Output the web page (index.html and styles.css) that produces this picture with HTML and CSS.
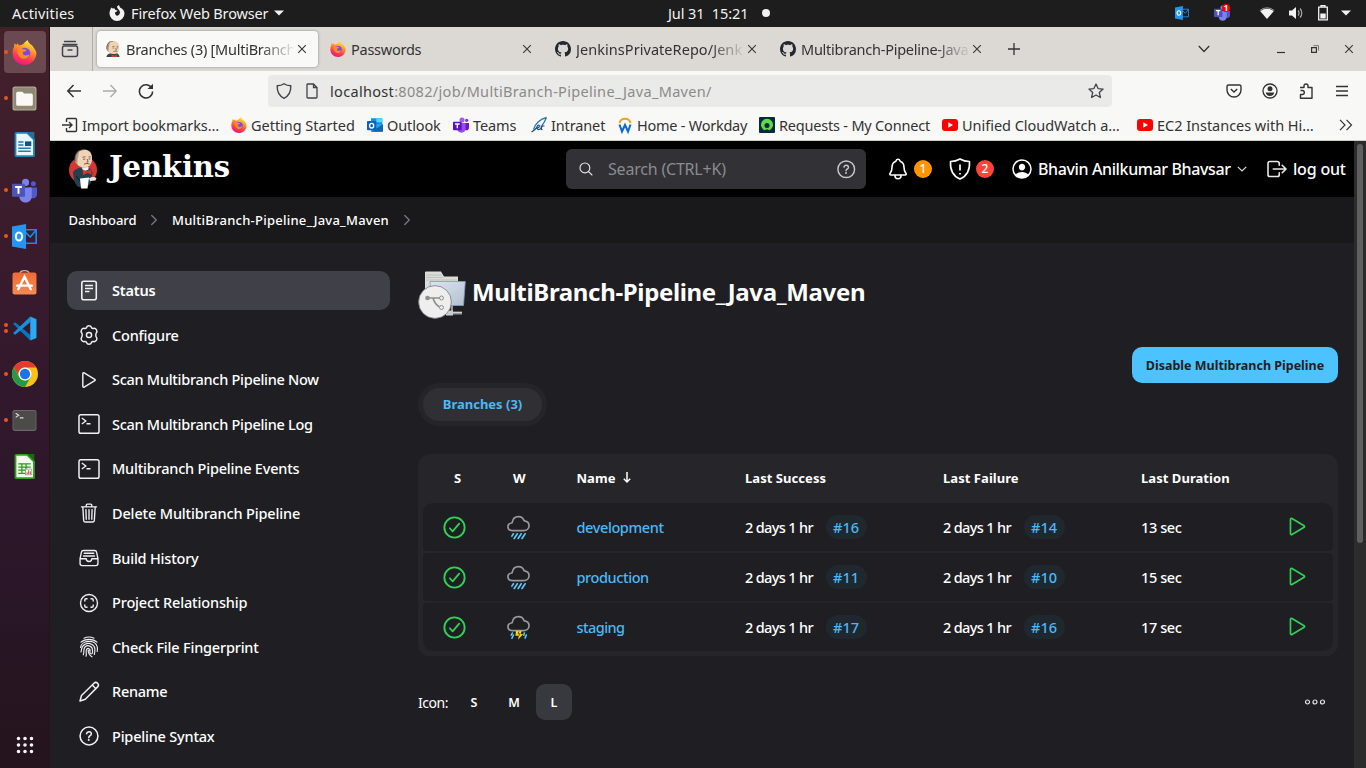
FILE: index.html
```html
<!DOCTYPE html>
<html lang="en">
<head>
<meta charset="utf-8">
<title>Branches (3) [MultiBranch-Pipeline_Java_Maven]</title>
<link rel="stylesheet" href="styles.css">
</head>
<body>
<svg class="sprite" width="0" height="0">
  <defs>
    <linearGradient id="g-fox" x1="0.7" y1="0" x2="0.3" y2="1"><stop offset="0" stop-color="#fff14f"/><stop offset=".35" stop-color="#ff9a26"/><stop offset=".7" stop-color="#ff3a50"/><stop offset="1" stop-color="#e31587"/></linearGradient>
    <linearGradient id="g-bag" x1="0" y1="0" x2="0" y2="1"><stop offset="0" stop-color="#f26a34"/><stop offset="1" stop-color="#f58a52"/></linearGradient>
    <linearGradient id="g-fold" x1="0" y1="0" x2="1" y2="1"><stop offset="0" stop-color="#dbe4ec"/><stop offset="1" stop-color="#b2c1d0"/></linearGradient>
    <symbol id="firefox" viewBox="0 0 24 24"><path d="M12 2.500C13 1.500 14 1 15 0c.5 2 1.500 3 3 4.200 1 .3 2.300 1.800 3.200 3.600C23 10 23.800 12 23.300 14.500 22.300 20 17.800 24 12 24 5.500 24 .5 19 .5 12.800c0-2.600.5-4.600 1.500-6.300L2.200 3l2 1.800L5.500 3.200l1.200 2c2-.5 3.600.1 5.300-2.700z" fill="url(#g-fox)"/><circle cx="12.300" cy="12.800" r="5.300" fill="#7548e8"/><path d="M5 9.500c2-1.800 3.800-1.600 5.300-.8l3.700.6c-.3 1.700-2.300 2-3.400 2.200-.5 1.800.4 3.200 2.600 3.300 1.700.1 2.700-1.300 3.600-.7-.8 2.700-3.300 4.200-6 3.800C7.300 17.300 5 14 5 9.500z" fill="#ff8a1f"/></symbol>
    <symbol id="outlook" viewBox="0 0 24 24"><path d="M6 2h16a1 1 0 0 1 1 1v10H6z" fill="#1490df"/><path d="M14 2h9v6h-9z" fill="#50d9ff"/><path d="M6 11h18v10a1 1 0 0 1-1 1H7a1 1 0 0 1-1-1z" fill="#28a8ea"/><path d="M6 22l18-11v10a1 1 0 0 1-1 1z" fill="#1066b5"/><rect x="0" y="6" width="14" height="14" rx="1.200" fill="#0a64bd"/><ellipse cx="7" cy="13" rx="3.100" ry="3.500" fill="none" stroke="#fff" stroke-width="2"/></symbol>
    <symbol id="outlook-old" viewBox="0 0 24 24"><path d="M12 5.500h11.200v13H12" fill="none" stroke="#1e88e5" stroke-width="1.600"/><path d="M13 8l4.500 4.500L23 6" fill="none" stroke="#1e88e5" stroke-width="1.600"/><path d="M0 2.500L13.500 0v24L0 21.500z" fill="#2196f3"/><ellipse cx="6.700" cy="12" rx="3" ry="3.800" fill="none" stroke="#fff" stroke-width="2"/></symbol>
    <symbol id="teams" viewBox="0 0 24 24"><circle cx="20.500" cy="5.600" r="2.400" fill="#5059c9"/><circle cx="13" cy="4.200" r="3.400" fill="#7b83eb"/><path d="M16 9h8v6.500c0 2.500-1.800 4-4 4s-4-1.500-4-4z" fill="#5059c9"/><path d="M7 9h12v8.500c0 3.500-2.500 6-6 6s-6-2.500-6-6z" fill="#7b83eb"/><rect x="0" y="5.500" width="12.500" height="12.500" rx="1" fill="#4b53bc"/><path d="M3 8.600h6.500M6.250 8.600V15.200" stroke="#fff" stroke-width="1.900"/></symbol>
    <symbol id="teams-new" viewBox="0 0 24 24"><circle cx="20.500" cy="5" r="2.400" fill="#7b2ff2"/><circle cx="13.500" cy="4.500" r="3.800" fill="#a35bf0"/><path d="M16 9h8v7c0 2.500-1.800 4-4 4s-4-1.500-4-4z" fill="#6a12d8"/><path d="M6 9h13v8c0 4-2.500 6.500-6.300 6.500S6 21 6 17z" fill="#9a4aea"/><rect x="0" y="7" width="13" height="13" rx="1.200" fill="#5b12c0"/><path d="M3 10.500h7M6.500 10.500V17" stroke="#fff" stroke-width="2"/></symbol>
    <symbol id="github" viewBox="0 0 16 16"><path fill="#24292f" d="M8 0C3.580 0 0 3.580 0 8c0 3.540 2.290 6.530 5.470 7.590.4.070.55-.17.55-.38 0-.19-.01-.82-.01-1.490-2.010.37-2.530-.49-2.690-.94-.09-.23-.48-.94-.82-1.130-.28-.15-.68-.52-.01-.53.630-.01 1.080.58 1.230.82.72 1.210 1.870.87 2.330.66.07-.52.28-.87.51-1.070-1.780-.2-3.640-.89-3.640-3.950 0-.87.31-1.590.82-2.150-.08-.2-.36-1.020.08-2.120 0 0 .67-.21 2.200.82.640-.18 1.320-.27 2-.27s1.360.09 2 .27c1.530-1.040 2.200-.82 2.200-.82.440 1.100.160 1.920.080 2.120.510.560.820 1.270.820 2.150 0 3.070-1.870 3.750-3.650 3.950.290.250.540.730.540 1.480 0 1.070-.010 1.930-.010 2.200 0 .210.150.460.550.380A8.010 8.010 0 0 0 16 8c0-4.420-3.580-8-8-8z"/></symbol>
    <g id="head"><path d="M6 11C6 4 9.500.6 15 .6S23.300 4 23 10.500c-.2 5-3 8-7.500 8S7.500 16 6 11z" fill="#efd3b4"/><path d="M6 12c-.8-5 1.500-9.500 5-11C9 4 9.800 7 8.500 10l-.2 5.500C6.800 14.500 6.200 13.500 6 12z" fill="#a89a88"/><path d="M6 12C5 5 9.500.5 15 .5" stroke="#333" stroke-width=".8" fill="none"/><path d="M13.500 8.300l3-.5m3 0l2.300.3M14 10.200h2.200m3.300-.2h1.800M18.200 10l.9 3-1.500.3" stroke="#5a4638" stroke-width=".8" fill="none"/><path d="M15 15.300c1.500-1 4-1 5.500-.3" stroke="#7d4a3a" stroke-width="1" fill="none"/></g>
    <symbol id="butler" viewBox="0 0 28 40"><ellipse cx="14" cy="21" rx="14" ry="13.500" fill="#d33833"/><path d="M4 23c2-3 6-4.500 9-4.500h6c3 1 4 3 4.500 5L22 34l-4 4H9.500C6 36 4.500 30 4 23z" fill="#24404c"/><path d="M12.500 18.500l2.500 4 4.500-2V18z" fill="#f4f1ec"/><use href="#head"/><path d="M13.500 20.500l4.500 1.800 4.500-2v5.200L18.500 24l-4.500 2z" fill="#d9332d"/><path d="M7 27l4 5" stroke="#0d222b" fill="none"/><path d="M11 29.500l9-1-1.500 11h-6.500z" fill="#fff"/><path d="M20 29.500c2-1.500 5-2 7.500-.5l-1 2.500-5.500.5z" fill="#e8e3dd"/></symbol>
    <symbol id="butler-face" viewBox="0 0 20 22"><path d="M1 22c.5-4 4-5 8-5.500h5c3 .5 4.500 2.500 5 5.500z" fill="#2d4651"/><use href="#head" transform="translate(-4.500 -.5)"/><path d="M8 18.500l4 1.500 4-1.500V22H8z" fill="#d9332d"/></symbol>
    <symbol id="doc" viewBox="0 0 16 16"><path d="M3.500 1h6L13 4.500V14a1 1 0 0 1-1 1H4a1 1 0 0 1-1-1V1.500zM9.500 1v3.500H13" fill="none" stroke="#42424a" stroke-width="1.300"/></symbol>
    <symbol id="yt" viewBox="0 0 16 16"><rect y="2" width="16" height="12" rx="3" fill="#f00"/><path d="M6.300 5.300v5.400L11 8z" fill="#fff"/></symbol>
    <symbol id="x" viewBox="0 0 10 10"><path d="M1.200 1.200l7.600 7.600M8.800 1.200L1.200 8.800" fill="none" stroke="#3d3d3d" stroke-width="1.200"/></symbol>
    <symbol id="help" viewBox="0 0 512 512"><circle cx="256" cy="256" r="208" fill="none" stroke="currentColor" stroke-width="36"/><path d="M200 202.300s.8-17.500 19.600-32.600C230.700 160.800 244 158.200 256 158c10.900-.1 20.700 1.700 26.500 4.500 10 4.700 29.500 16.300 29.500 41 0 26-17 37.800-36.400 50.800S251 281.400 251 296" fill="none" stroke="currentColor" stroke-width="36" stroke-linecap="round"/><circle cx="250" cy="348" r="24" fill="currentColor"/></symbol>
    <symbol id="chev" viewBox="0 0 512 512"><path d="M184 112l144 144-144 144" fill="none" stroke="currentColor" stroke-width="44" stroke-linecap="round" stroke-linejoin="round"/></symbol>
    <symbol id="play" viewBox="0 0 512 512"><path d="M112 111v290c0 17.400 17 28.500 31 20.200l247.900-148.400c12.100-7.300 12.100-26.300 0-33.600L143 90.800c-14-8.300-31 2.800-31 20.200z" fill="none" stroke="currentColor" stroke-width="34"/></symbol>
    <symbol id="term" viewBox="0 0 22 22"><rect x="1" y="1.800" width="20" height="18.400" rx="1.800" fill="none" stroke="currentColor" stroke-width="1.500"/><path d="M3.800 5l4 3-4 3M8.500 10.800h4" fill="none" stroke="currentColor" stroke-width="1.400"/></symbol>
    <symbol id="ok" viewBox="0 0 512 512"><circle cx="256" cy="256" r="208" fill="none" stroke="#30d158" stroke-width="38"/><path d="M352 176L217.600 336 160 272" fill="none" stroke="#30d158" stroke-width="36" stroke-linecap="round" stroke-linejoin="round"/></symbol>
    <symbol id="cloud" viewBox="0 0 512 512"><path d="M114.600 162.900A16 16 0 0 0 128 149.600C140 76.200 193 32 256 32c58 0 96.600 37.800 112.200 77.700a15.800 15.800 0 0 0 12.200 9.900c50 8.200 91.600 41.600 91.600 99.600 0 59.400-48.600 100.800-108 100.800H130c-49.500 0-90-24.700-90-79.200 0-48.500 38.700-72.200 74.600-77.900z" fill="none" stroke="#98989d" stroke-width="34"/></symbol>
    <symbol id="rain" viewBox="0 0 512 512"><use href="#cloud"/><path d="M144 384l-32 48M224 384l-64 96M304 384l-64 96M384 384l-64 96" transform="translate(8)" stroke="#5ac8fa" stroke-width="34" stroke-linecap="round"/></symbol>
    <symbol id="storm" viewBox="0 0 512 512"><use href="#cloud"/><path d="M130 370l-24 42M152 410l-30 66M376 370l-10 42M416 410l-24 62" stroke="#5ac8fa" stroke-width="34" stroke-linecap="round"/><path d="M205 325h115l-18 62h48l-102 118 14-82h-70z" fill="#ffd60a"/><path d="M264 335l-16 50h40l-20 40" fill="none" stroke="#3a3420" stroke-width="16"/></symbol>
  </defs>
</svg>

<header class="topbar">
  <span class="activities">Activities</span>
  <svg class="tb-fox" viewBox="0 0 16 16"><path d="M8 1.500L10 0l1 2.500C13.500 3.500 15.500 5.500 15.500 8.500a7.500 7.500 0 0 1-15 0C.5 6 1.300 4 2.500 2.500l1.200 1 1.500-.3L6.500 5l2 .5c0 1.500-2 1-2.500 2.300C6 10 7.500 11 9 10.500c2.500-1 2.500-4.500.5-6C8.500 3.500 8 2.500 8 1.500z" fill="#f2f2f2"/></svg>
  <span class="app-name">Firefox Web Browser</span>
  <svg class="caret" viewBox="0 0 10 6"><path d="M0 .5h10L5 5.500z" fill="#f2f2f2"/></svg>
  <span class="clock">Jul 31&nbsp; 15:21</span><i class="clock-dot"></i>
  <div class="tray">
    <svg class="t-ol" viewBox="0 0 24 24"><use href="#outlook-old"/></svg>
    <span class="t-teams"><svg viewBox="0 0 24 24"><use href="#teams"/></svg><b>1</b></span>
    <svg class="t-wifi" viewBox="0 0 16 14"><path d="M1.300 5.200a10.500 10.500 0 0 1 13.400 0L8 13z" fill="#f2f2f2"/><path d="M.8 4.500a11 11 0 0 1 14.400 0" fill="none" stroke="#a8a8a8" stroke-width=".9"/></svg>
    <svg class="t-vol" viewBox="0 0 16 14"><path d="M1 4.500h3L8 1v12L4 9.500H1z" fill="#f2f2f2"/><path d="M10 4.500a3.500 3.500 0 0 1 0 5M12 2.500a6.500 6.500 0 0 1 0 9" fill="none" stroke="#aaa" stroke-width="1.200"/></svg>
    <svg class="t-bat" viewBox="0 0 10 16"><path d="M.7 2.200h8.600v12.600H.7zM3 .7h4v1.500H3z" fill="none" stroke="#f2f2f2" stroke-width="1.300"/><path d="M2.300 8.500h5.400v5H2.300z" fill="#f2f2f2"/></svg>
    <svg class="caret" viewBox="0 0 10 6"><path d="M0 .5h10L5 5.500z" fill="#f2f2f2"/></svg>
  </div>
</header>

<div class="desk">
  <nav class="dock">
    <span class="dk active run"><svg viewBox="0 0 24 24"><use href="#firefox"/></svg></span>
    <span class="dk run"><svg viewBox="0 0 24 24"><rect x=".5" y=".5" width="23" height="23" rx="2.500" fill="#b3ac98"/><rect x="1.500" y="1.500" width="21" height="21" rx="2" fill="#8f8873"/><path d="M4 7a1.500 1.500 0 0 1 1.500-1.500H10l1.500 1.800h7A1.500 1.500 0 0 1 20 8.800v8.700a1.500 1.500 0 0 1-1.500 1.500h-13A1.500 1.500 0 0 1 4 17.500z" fill="#faf9f7"/></svg></span>
    <span class="dk"><svg viewBox="0 0 24 24"><path d="M2.500 1.500a1.500 1.500 0 0 1 1.500-1.500h11l7 7v15.500a1.500 1.500 0 0 1-1.500 1.500H4A1.500 1.500 0 0 1 2.500 22.500z" fill="#1f86bd"/><path d="M4.200 1.700h10l6 6v14.600h-16z" fill="#eaf6fd"/><path d="M15 0h6.500v6.500z" fill="#2a6f96"/><path d="M6 9.500h5M6 12.500h5M6 15.500h12M6 18.500h12" stroke="#1f7fb5" stroke-width="1.400"/><path d="M12.500 9h6v4.500h-6z" fill="#14557c"/></svg></span>
    <span class="dk run"><svg viewBox="0 0 24 24"><use href="#teams"/></svg></span>
    <span class="dk run"><svg viewBox="0 0 24 24"><use href="#outlook-old"/></svg></span>
    <span class="dk"><svg viewBox="0 0 24 24"><path d="M7.500 4C7.500-.6 16.500-.6 16.500 4" fill="none" stroke="#cbb59b" stroke-width="1.200"/><rect x=".5" y="2.500" width="23" height="21" rx="2" fill="url(#g-bag)"/><path d="M6 18.500L12 6.500l6 12M5 15h14" fill="none" stroke="#fff" stroke-width="2.300" stroke-linecap="round"/></svg></span>
    <span class="dk run two"><svg viewBox="0 0 24 24"><path d="M1 7.500L3 6l14.500 12v5.500z" fill="#0079c4"/><path d="M1 16.500L3 18 17.500 6V.5z" fill="#1490df"/><path d="M17.500.5L23.500 3v18l-6 2.500z" fill="#2ba9f2"/></svg></span>
    <span class="dk run"><svg class="chrome" viewBox="0 0 48 48"><circle cx="24" cy="24" r="24" fill="#fbc116"/><path d="M3.200 12A24 24 0 0 1 44.800 12H24a12 12 0 0 0-10.400 18z" fill="#e33b2e"/><path d="M3.200 12A24 24 0 0 0 24 48l10.400-18A12 12 0 0 1 13.600 30z" fill="#229a48"/><circle cx="24" cy="24" r="12" fill="#fff"/><circle cx="24" cy="24" r="9.500" fill="#1a73e8"/></svg></span>
    <span class="dk run"><svg viewBox="0 0 24 24"><rect x=".5" y="2" width="23" height="20" rx="2" fill="#6a6866"/><rect x="1.300" y="2.800" width="21.400" height="18" rx="1.500" fill="#4c4b49"/><path d="M3.500 5l3 2-3 2M7.500 9.500h3.500" fill="none" stroke="#ddd" stroke-width="1.100"/></svg></span>
    <span class="dk"><svg viewBox="0 0 24 24"><path d="M2.500 1.500a1.500 1.500 0 0 1 1.500-1.500h11l7 7v15.500a1.500 1.500 0 0 1-1.500 1.500H4A1.500 1.500 0 0 1 2.500 22.500z" fill="#30a01c"/><path d="M4.200 1.700h10l6 6v14.600h-16z" fill="#f2fbef"/><path d="M15 0h6.500v6.500z" fill="#1b6a10"/><path d="M6 9.500h12M6 12.500h12M6 15.500h12M6 18.500h7M9.500 9v10M13.500 9v10" stroke="#2c9a1a" stroke-width="1.200"/><rect x="13" y="14.500" width="6" height="5.500" fill="#fff" stroke="#888" stroke-width=".6"/><path d="M14.500 19.500v-2M16 19.500v-4M17.600 19.500v-3" stroke="#e0452c" stroke-width="1"/></svg></span>
    <svg class="apps" viewBox="0 0 18 18"><path d="M2.500 2.500h0M9 2.500h0M15.500 2.500h0M2.500 9h0M9 9h0M15.500 9h0M2.500 15.500h0M9 15.500h0M15.500 15.500h0" stroke="#f5f5f5" stroke-width="3.600" stroke-linecap="round"/></svg>
  </nav>

  <div class="browser">
    <div class="tabs">
      <div class="view-btn"><svg viewBox="0 0 18 18"><path d="M3.500 1.500h11M2 4.500h14" stroke="#42424a" stroke-width="1.300" stroke-linecap="round"/><rect x="1.500" y="6" width="15" height="10.500" rx="2" fill="none" stroke="#42424a" stroke-width="1.500"/><path d="M6.500 10h5" stroke="#42424a" stroke-width="1.500"/></svg></div>
      <div class="tab on"><svg class="fav"><use href="#butler-face"/></svg><span class="tl fade">Branches (3) [MultiBranch</span><svg class="cx"><use href="#x"/></svg></div>
      <div class="tab"><svg class="fav"><use href="#firefox"/></svg><span class="tl">Passwords</span><svg class="cx"><use href="#x"/></svg></div>
      <div class="tab"><svg class="fav"><use href="#github"/></svg><span class="tl fade repo">JenkinsPrivateRepo/Jenk</span><svg class="cx"><use href="#x"/></svg></div>
      <div class="tab"><svg class="fav"><use href="#github"/></svg><span class="tl fade">Multibranch-Pipeline-Java</span><svg class="cx"><use href="#x"/></svg></div>
      <svg class="plus" viewBox="0 0 12 12"><path d="M6 0v12M0 6h12" stroke="#333" stroke-width="1.300"/></svg>
      <div class="winctl">
        <svg class="w-chev" viewBox="0 0 12 8"><path d="M.8 1L6 6.500 11.200 1" fill="none" stroke="#333" stroke-width="1.300"/></svg>
        <svg class="w-min" viewBox="0 0 8 10"><path d="M0 7.500h8" stroke="#333" stroke-width="1.200"/></svg>
        <svg class="w-max" viewBox="0 0 8 8"><path d="M.6 2.600h4.800v4.800H.6z" fill="none" stroke="#333" stroke-width="1.200"/><path d="M2.500.6h5v5" fill="none" stroke="#777"/></svg>
        <svg class="w-x"><use href="#x"/></svg>
      </div>
    </div>
    <div class="nav">
      <svg class="n-back" viewBox="0 0 14 14"><path d="M14 7H1M6.500 1L.8 7l5.700 6" fill="none" stroke="#333" stroke-width="1.500"/></svg>
      <svg class="n-fwd" viewBox="0 0 14 14"><path d="M0 7h13M7.500 1l5.700 6-5.700 6" fill="none" stroke="#aaa" stroke-width="1.300"/></svg>
      <svg class="n-re" viewBox="0 0 16 16"><path d="M13.800 5.200A6.600 6.600 0 1 0 14.600 8.500" fill="none" stroke="#333" stroke-width="1.500"/><path d="M15 .8V6H9.500z" fill="#333"/></svg>
      <div class="url">
        <svg class="u-sh" viewBox="0 0 16 16"><path d="M8 .8c2 1.500 4.300 2 6.800 2C15 8.500 12.800 13 8 15.300 3.200 13 1 8.500 1.200 2.800c2.500 0 4.800-.5 6.800-2z" fill="none" stroke="#42424a" stroke-width="1.400" stroke-linejoin="round"/></svg>
        <svg class="u-doc"><use href="#doc"/></svg>
        <span class="addr"><b>localhost</b>:8082/job/MultiBranch-Pipeline_Java_Maven/</span>
        <svg class="u-star" viewBox="0 0 16 16"><path d="M8 1l2.100 4.600 5 .5-3.800 3.400 1.100 5L8 12l-4.400 2.500 1.100-5L.9 6.100l5-.5z" fill="none" stroke="#42424a" stroke-width="1.300" stroke-linejoin="round"/></svg>
      </div>
      <svg class="n-ic" viewBox="0 0 16 16"><path d="M2.500 2h11A1.500 1.500 0 0 1 15 3.500V7A7 7 0 0 1 1 7V3.500A1.500 1.500 0 0 1 2.500 2z" fill="none" stroke="#333" stroke-width="1.400"/><path d="M4.800 6L8 9l3.200-3" fill="none" stroke="#333" stroke-width="1.400"/></svg>
      <svg class="n-ic" viewBox="0 0 16 16"><circle cx="8" cy="8" r="7" fill="none" stroke="#333" stroke-width="1.300"/><circle cx="8" cy="5.800" r="2.500" fill="#333"/><path d="M3.800 9.500h8.400c0 1.800-1.800 3.500-4.200 3.500S3.800 11.300 3.800 9.500z" fill="#333"/></svg>
      <svg class="n-ic" viewBox="0 0 16 16"><path d="M2 4.500h4V3a2 2 0 0 1 4 0v1.500h4v10.800H2.500v-3.800h1.800a2 2 0 0 0 0-4H2.500" fill="none" stroke="#333" stroke-width="1.400" stroke-linejoin="round"/></svg>
      <svg class="n-ic n-menu" viewBox="0 0 12 12"><path d="M0 1.500h12M0 6h12M0 10.500h12" stroke="#333" stroke-width="1.300"/></svg>
    </div>
    <div class="marks">
      <span><svg viewBox="0 0 16 16"><path d="M4.500 5V2.500A1 1 0 0 1 5.500 1.500h8a1 1 0 0 1 1 1v11a1 1 0 0 1-1 1h-8a1 1 0 0 1-1-1V11M0 8h10M7 5l3 3-3 3" fill="none" stroke="#333" stroke-width="1.400"/></svg><em>Import bookmarks…</em></span>
      <span><svg><use href="#firefox"/></svg><em class="wide">Getting Started</em></span>
      <span><svg><use href="#outlook"/></svg><em>Outlook</em></span>
      <span class="nudge"><svg><use href="#teams-new"/></svg><em>Teams</em></span>
      <span class="nudge"><svg viewBox="0 0 16 16"><path d="M15.500.5C9 2 4 7 2.500 12.500M15.500.5C14 4 13 6 11 8.500" fill="none" stroke="#2e79ab" stroke-width="1.300"/><path d="M.5 15c2-1 4-2 5.500-5M6.500 11c2-.3 2.500-3 1-3s-2.500 4-.5 4.500S10.500 11 11 9c-.5 2-1.500 4 .5 3.500M9.500 9h4" fill="none" stroke="#174a70" stroke-width="1.200"/></svg><em>Intranet</em></span>
      <span><svg viewBox="0 0 16 16"><path d="M2.500 6a5.700 5.700 0 0 1 11 0" fill="none" stroke="#f8a01d" stroke-width="2"/><path d="M2.500 7.500l2.500 7L8 8l3 6.500 2.500-7" fill="none" stroke="#0d66d0" stroke-width="2"/></svg><em class="tight">Home - Workday</em></span>
      <span><svg viewBox="0 0 16 16"><rect width="16" height="16" rx="1" fill="#062b3d"/><path d="M5.300 13.200a6 6 0 1 1 5.400 0L8 12.200z" fill="#5fd84a"/><circle cx="8" cy="8.600" r="2.500" fill="#062b3d"/></svg><em class="mid">Requests - My Connect</em></span>
      <span><svg><use href="#yt"/></svg><em class="wide">Unified CloudWatch a…</em></span>
      <span><svg><use href="#yt"/></svg><em class="wide">EC2 Instances with Hi…</em></span>
      <svg class="more" viewBox="0 0 14 12"><path d="M1 .8L6 6l-5 5.200M7.500.8l5 5.200-5 5.200" fill="none" stroke="#333" stroke-width="1.200"/></svg>
    </div>

    <div class="page">
      <div class="content">
        <div class="jhead">
          <svg class="logo"><use href="#butler"/></svg>
          <span class="brand">Jenkins</span>
          <div class="search">
            <svg class="s-mag" viewBox="0 0 512 512"><path d="M221 64a157 157 0 1 0 157 157A157 157 0 0 0 221 64zM338 338l110 110" fill="none" stroke="#e5e5ea" stroke-width="36" stroke-linecap="round"/></svg>
            <span class="ph">Search (CTRL+K)</span>
            <svg class="s-help"><use href="#help"/></svg>
          </div>
          <svg class="h-bell" viewBox="0 0 512 512"><path d="M427.700 351.400C402 320 383.900 304 383.900 217.300 383.900 138 343.300 109.700 310 96c-4.400-1.800-8.600-6-10-10.500C294.200 65.500 277.800 48 256 48s-38.200 17.500-44 37.500c-1.400 4.600-5.500 8.700-10 10.500-33.400 13.700-73.900 41.900-73.900 121.300C128.100 304 110 320 84.300 351.400 73.700 364.400 83 384 101.600 384h308.900c18.500 0 27.800-19.600 17.200-32.600zM320 384v16a64 64 0 0 1-128 0v-16" fill="none" stroke="#fff" stroke-width="34" stroke-linejoin="round"/></svg>
          <b class="badge org">1</b>
          <svg class="h-sh" viewBox="0 0 24 24"><path d="M12 2c3 1.800 6 2.500 9.500 2.500C22 12.500 19 19 12 22 5 19 2 12.500 2.500 4.500 6 4.500 9 3.800 12 2z" fill="none" stroke="#fff" stroke-width="1.600" stroke-linejoin="round"/><path d="M12 7.500v6M12 16v1.600" stroke="#fff" stroke-width="1.700"/></svg>
          <b class="badge red">2</b>
          <svg class="h-user" viewBox="0 0 512 512"><circle cx="256" cy="256" r="192" fill="none" stroke="#fff" stroke-width="32"/><path d="M256 144c-40 0-70 32-67.800 72.800C191 256 221.500 288 256 288s64.800-32 67.800-71.200C326.500 176 296 144 256 144zM120 380c30-42 82-60 136-60s106 18 136 60c-80 90-192 90-272 0z" fill="#fff"/></svg>
          <span class="user">Bhavin Anilkumar Bhavsar</span>
          <svg class="h-chev" viewBox="0 0 10 6"><path d="M.8.8L5 5 9.200.8" fill="none" stroke="#ddd" stroke-width="1.200"/></svg>
          <svg class="h-out" viewBox="0 0 512 512"><path d="M304 336v40a40 40 0 0 1-40 40H104a40 40 0 0 1-40-40V136a40 40 0 0 1 40-40h152c22 0 48 18 48 40v40M368 336l80-80-80-80M176 256h256" fill="none" stroke="#e8e8e8" stroke-width="34" stroke-linecap="round" stroke-linejoin="round"/></svg>
          <span class="out">log out</span>
        </div>
        <div class="crumbs"><span class="c1">Dashboard</span><svg><use href="#chev"/></svg><span class="c2">MultiBranch-Pipeline_Java_Maven</span><svg><use href="#chev"/></svg></div>
        <div class="cols">
          <aside class="side">
            <a class="sel"><svg viewBox="0 0 22 22"><rect x="3.800" y="1.300" width="14.500" height="18.500" rx="2" fill="none" stroke="currentColor" stroke-width="1.600"/><path d="M7 5.500h8M7 8.500h8M7 11.500h4.500" stroke="currentColor" stroke-width="1.400"/></svg><span>Status</span></a>
            <a><svg viewBox="0 0 512 512"><g fill="none" stroke="currentColor" stroke-width="34" stroke-linejoin="round"><circle cx="256" cy="256" r="60"/><path d="M256 42c34 0 48 12 54 34 6 22 22 34 46 28 30-8 56 0 74 30 16 30 14 50-2 68-18 20-18 88 0 108 16 18 18 38 2 68-18 30-44 38-74 30-24-6-40 6-46 28-6 22-20 34-54 34s-48-12-54-34c-6-22-22-34-46-28-30 8-56 0-74-30-16-30-14-50 2-68 18-20 18-88 0-108-16-18-18-38-2-68 18-30 44-38 74-30 24 6 40-6 46-28 6-22 20-34 54-34z"/></g></svg><span>Configure</span></a>
            <a><svg><use href="#play"/></svg><span class="tight">Scan Multibranch Pipeline Now</span></a>
            <a><svg><use href="#term"/></svg><span class="tight">Scan Multibranch Pipeline Log</span></a>
            <a><svg><use href="#term"/></svg><span>Multibranch Pipeline Events</span></a>
            <a><svg viewBox="0 0 512 512"><path d="M112 112l20 320c1 18.500 14.400 32 32 32h184c17.700 0 30.900-13.500 32-32l20-320M80 112h352M192 112V72a24 24 0 0 1 24-24h80a24 24 0 0 1 24 24v40M256 176v224M184 176l8 224M328 176l-8 224" fill="none" stroke="currentColor" stroke-width="32" stroke-linecap="round" stroke-linejoin="round"/></svg><span class="wide">Delete Multibranch Pipeline</span></a>
            <a><svg viewBox="0 0 512 512"><path d="M384 80H128c-26 0-43 14-48 40L48 272v112a48 48 0 0 0 48 48h320a48 48 0 0 0 48-48V272l-32-152c-5-27-23-40-48-40zM48 272h144M320 272h144M192 272a64 64 0 0 0 128 0M144 144h224M128 208h256" fill="none" stroke="currentColor" stroke-width="32" stroke-linecap="round" stroke-linejoin="round"/></svg><span>Build History</span></a>
            <a><svg viewBox="0 0 22 22"><circle cx="11" cy="11" r="8.500" fill="none" stroke="currentColor" stroke-width="1.400"/><path d="M6.800 9.500V8A1.200 1.200 0 0 1 8 6.800h1.500M12.500 6.800H14A1.200 1.200 0 0 1 15.200 8v1.500M15.200 12.500V14a1.200 1.200 0 0 1-1.200 1.200h-1.500M9.500 15.200H8A1.200 1.200 0 0 1 6.800 14v-1.500" fill="none" stroke="currentColor" stroke-width="1.400"/></svg><span class="wide">Project Relationship</span></a>
            <a><svg viewBox="0 0 22 22"><g fill="none" stroke="currentColor" stroke-width="1.150" stroke-linecap="round"><path d="M6 2.200Q11-.2 16 2.200M3 6.200C7 2.500 15 2.500 19 6.200M2.600 11.500C3 4 17.500 2.800 19.300 11c.3 1.800.2 3-.1 4.500M3 16c.8-2.500-.2-5.500 4-7.800 4.500-2 9.800.3 9.900 5 0 2.500-.2 3.800-.6 5.300M5.300 18.800c1.200-3.300-.3-5.800 1.700-7.800 3-2.800 7.500-.5 7.500 3 0 1.500.3 2.500-.3 3.300-.7.8-2 .5-2.200-.8 0-1 .1-2.500-1-2.500-1.600 0-.5 3 .5 4.500.8 1.300 1.500 1.900 2.500 2.300M8 20.200c1-2.500-.5-4.500.5-6.700.8-1.500 3.500-1.500 3.700.7"/></g></svg><span>Check File Fingerprint</span></a>
            <a><svg viewBox="0 0 22 22"><path d="M2 20l1.500-5.500L16 2.300a2.500 2.500 0 0 1 3.600 3.600L7.300 18.200zM14.300 4l3.600 3.700" fill="none" stroke="currentColor" stroke-width="1.500" stroke-linejoin="round"/></svg><span class="tight">Rename</span></a>
            <a><svg><use href="#help"/></svg><span>Pipeline Syntax</span></a>
          </aside>
          <main class="main">
            <div class="title">
              <svg viewBox="0 0 48 48"><path d="M7 1.500A1 1 0 0 1 8 .5h15L26 5.500h14V33H7z" fill="#dcdcda"/><path d="M8 4h16M8 6.500h17M8 9h31" stroke="#b8b8b6" stroke-width=".8"/><path d="M34 33v7" stroke="#999" stroke-width="2"/><path d="M12 10.500h35.300l-1.800 24H14z" fill="url(#g-fold)" stroke="#7e9cc4" stroke-width=".8"/><path d="M28 39.500h7v5h-7z" fill="#ccc"/><path d="M35 40.500h9v3h-9z" fill="#999"/><path d="M35 41.500h9" stroke="#ddd" stroke-width=".8"/><circle cx="17" cy="31" r="16.400" fill="#eee" stroke="#777" stroke-width=".8"/><path d="M10 27h12M15 27c1.500 5 3 7 6.500 9" fill="none" stroke="#8f8f8c" stroke-width="1.700"/><circle cx="9.500" cy="27" r="2.300" fill="#8f8f8c"/><circle cx="23.500" cy="27" r="2" fill="#eee" stroke="#8f8f8c"/><circle cx="23.500" cy="36.500" r="2" fill="#eee" stroke="#8f8f8c"/></svg>
              <h1>MultiBranch-Pipeline_Java_Maven</h1>
            </div>
            <div class="actions"><button class="disable">Disable Multibranch Pipeline</button></div>
            <div class="pill"><span>Branches (3)</span></div>
            <section class="table">
              <div class="row head"><span class="h-s">S</span><span class="h-w">W</span><span class="h-name">Name <svg viewBox="0 0 8 11"><path d="M4 0v10M.8 6.800L4 10l3.200-3.200" fill="none" stroke="#fff" stroke-width="1.500"/></svg></span><span>Last Success</span><span>Last Failure</span><span>Last Duration</span></div>
              <div class="row first"><svg><use href="#ok"/></svg><svg><use href="#rain"/></svg><a>development</a><span><i>2 days 1 hr</i><b>#16</b></span><span><i>2 days 1 hr</i><b>#14</b></span><span class="dur">13 sec</span><svg class="go"><use href="#play"/></svg></div>
              <div class="row"><svg><use href="#ok"/></svg><svg><use href="#rain"/></svg><a>production</a><span><i>2 days 1 hr</i><b>#11</b></span><span><i>2 days 1 hr</i><b>#10</b></span><span class="dur">15 sec</span><svg class="go"><use href="#play"/></svg></div>
              <div class="row last"><svg><use href="#ok"/></svg><svg><use href="#storm"/></svg><a class="stg">staging</a><span><i>2 days 1 hr</i><b>#17</b></span><span><i>2 days 1 hr</i><b>#16</b></span><span class="dur">17 sec</span><svg class="go"><use href="#play"/></svg></div>
            </section>
            <div class="sizes"><span class="lbl">Icon:</span><b>S</b><b>M</b><b class="cur">L</b><svg class="dots" viewBox="0 0 22 8"><g fill="none" stroke="#e5e5ea" stroke-width="1.200"><circle cx="3.500" cy="4" r="2"/><circle cx="11" cy="4" r="2"/><circle cx="18.500" cy="4" r="2"/></g></svg></div>
          </main>
        </div>
      </div>
      <div class="scroll"><i></i></div>
    </div>
  </div>
</div>
</body>
</html>
```
FILE: styles.css
```css
* { box-sizing: border-box; }
body { margin: 0; width: 1366px; height: 768px; overflow: hidden; font-family: "Noto Sans", sans-serif; font-size: 14.5px; background: #1f1f23; white-space: nowrap; }
svg { flex: none; display: block; overflow: visible; }
.sprite { position: absolute; }

.topbar { height: 27px; background: #1d1d1d; color: #f2f2f2; display: flex; align-items: center; padding-left: 12px; padding-bottom: 1px; font-size: 14.5px; }
.activities { width: 97px; letter-spacing: .2px; }
.tb-fox { width: 16px; height: 16px; margin-right: 6px; }
.app-name { width: 143px; letter-spacing: -.15px; }
.caret { width: 10px; height: 6px; }
.clock { margin-left: 384px; width: 94px; letter-spacing: -.1px; }
.clock-dot { width: 8px; height: 8px; border-radius: 50%; background: #f2f2f2; }
.tray { display: flex; align-items: center; margin-left: auto; padding-right: 15px; }
.t-ol { width: 16px; height: 14px; margin-right: 24px; }
.t-teams { position: relative; width: 16px; height: 16px; margin-right: 29px; }
.t-teams svg { width: 16px; height: 16px; }
.t-teams b { position: absolute; right: 0; top: -1px; width: 8px; height: 8px; border-radius: 50%; background: #f00; font-size: 8px; line-height: 8px; text-align: center; color: #fff; }
.t-wifi { width: 16px; height: 14px; margin-right: 13px; }
.t-vol { width: 16px; height: 14px; margin-right: 14px; }
.t-bat { width: 10px; height: 16px; margin-right: 13px; }

.desk { display: flex; height: 741px; }
.dock { width: 50px; display: flex; flex-direction: column; align-items: center; padding: 1px 0 0 0; background: linear-gradient(#43212a 0, #3b1c2c 25%, #32182d 50%, #2a1628 75%, #24141c 100%); border-right: 1px solid #22131c; }
.dk { position: relative; width: 42px; height: 42px; margin: 2px 0; display: flex; align-items: center; justify-content: center; border-radius: 4px; }
.dk svg { width: 25px; height: 25px; }
.dk .chrome { width: 26px; height: 26px; }
.dk.active { background: #6a4a50; margin: 3px 0 2px; }
.dk.run::before { content: ""; position: absolute; left: 0; top: 19px; width: 4px; height: 4px; border-radius: 50%; background: #e95420; }
.dk.two::before { top: 16px; box-shadow: 0 6px #e95420; }
.apps { width: 18px; height: 18px; margin-top: auto; margin-bottom: 14px; }

.browser { width: 1316px; }
.tabs { height: 44px; background: #dcd9d4; display: flex; align-items: center; }
.view-btn { width: 43px; height: 44px; display: flex; align-items: center; padding-left: 11px; border-right: 1px solid #b0aca7; margin-right: 4px; }
.view-btn svg { width: 18px; height: 18px; }
.tab { width: 221px; height: 36px; margin-right: 4px; padding-left: 8px; display: flex; align-items: center; border-radius: 4px; color: #333; }
.tab.on { background: #f9f9f8; box-shadow: 0 0 3px #888; }
.fav { width: 16px; height: 16px; margin-right: 5px; }
.tl { width: 167px; height: 20px; line-height: 20px; margin-right: 4px; letter-spacing: -.25px; }
.tl.repo { letter-spacing: .05px; }
.fade { mask-image: linear-gradient(90deg, #000 80%, transparent 102%); }
.cx { width: 10px; height: 10px; }
.plus { width: 12px; height: 12px; margin-left: 11px; }
.winctl { display: flex; align-items: center; margin-left: auto; padding-right: 12px; }
.w-chev { width: 12px; height: 8px; margin-right: 67px; }
.w-min { width: 8px; height: 10px; margin-top: 2px; margin-right: 26px; }
.w-max { width: 8px; height: 8px; margin-right: 25px; }
.w-x { width: 10px; height: 10px; }
.nav { height: 41px; background: #f8f8f6; display: flex; align-items: center; padding-left: 17px; padding-bottom: 1px; }
.n-back { width: 14px; height: 14px; margin-right: 22px; }
.n-fwd { width: 14px; height: 14px; margin-right: 21px; }
.n-re { width: 16px; height: 16px; margin-right: 114px; }
.url { width: 844px; height: 32px; background: #eaeae8; border-radius: 4px; display: flex; align-items: center; padding: 0 8px; margin-right: 114px; }
.u-sh { width: 16px; height: 16px; margin-right: 12px; }
.u-doc { width: 16px; height: 16px; margin-right: 10px; }
.addr { color: #8b8b89; letter-spacing: .32px; }
.addr b { font-weight: 400; color: #333; }
.u-star { width: 16px; height: 16px; margin-left: auto; }
.n-ic { width: 16px; height: 16px; margin-right: 20px; }
.n-menu { width: 12px; height: 12px; margin: 0 0 0 2px; }
.marks { height: 29px; background: #f8f8f6; border-bottom: 1px solid #cfccc4; display: grid; grid-template-columns: 169px 136px 85px 78px 87px 142px 183px 195px 202px 14px; align-items: center; padding-left: 12px; padding-bottom: 2px; color: #333; }
.marks span { display: flex; align-items: center; }
.marks .nudge { padding-left: 1px; }
.marks span svg { width: 16px; height: 16px; margin-right: 4px; }
.marks em { font-style: normal; letter-spacing: -.13px; }
.marks em.wide { letter-spacing: -.03px; }
.marks em.tight { letter-spacing: -.25px; }
.marks em.mid { letter-spacing: -.2px; }
.more { width: 14px; height: 12px; }

.page { display: flex; height: 627px; }
.content { width: 1304px; background: #1f1f23; color: #fff; overflow: hidden; }
.scroll { width: 12px; background: #2c2c2c; padding: 3px; }
.scroll i { display: block; width: 6px; height: 399px; border-radius: 3px; background: #5f5f5f; }
.jhead { height: 56px; background: #000; display: flex; align-items: center; padding-left: 19px; }
.logo { width: 28px; height: 40px; margin-right: 12px; }
.brand { width: 457px; font: bold 29px/40px "DejaVu Serif", serif; letter-spacing: -.1px; margin-top: -4px; }
.search { width: 300px; height: 40px; background: #323236; border-radius: 6px; display: flex; align-items: center; padding: 0 10px 0 12px; margin-right: 20px; }
.s-mag { width: 16px; height: 16px; margin-right: 14px; }
.ph { color: #8b8b90; font-size: 16px; letter-spacing: -.2px; }
.s-help { width: 20.5px; height: 20.5px; margin-left: auto; color: #c8c8cc; }
.h-bell { width: 24px; height: 24px; margin-right: 4px; }
.badge { width: 18px; height: 18px; border-radius: 50%; font-size: 12px; font-weight: 500; line-height: 18px; text-align: center; }
.org { background: #ff9500; margin-right: 16px; }
.h-sh { width: 24px; height: 24px; margin-right: 4px; }
.red { background: #ff453a; margin-right: 16px; }
.h-user { width: 24px; height: 24px; margin-right: 4px; }
.user { font-size: 16px; font-weight: 500; width: 199px; letter-spacing: -.38px; }
.h-chev { width: 10px; height: 6px; margin-right: 18px; }
.h-out { width: 24px; height: 24px; margin-right: 4px; }
.out { font-size: 16px; font-weight: 500; letter-spacing: -.2px; }
.crumbs { height: 46px; background: #19191b; display: flex; align-items: center; padding-left: 18.5px; font-size: 13px; font-weight: 500; }
.crumbs svg { width: 16px; height: 16px; color: #77777c; }
.c1 { width: 77px; }
.c2 { margin-left: 10.5px; width: 226.5px; letter-spacing: .24px; }
.cols { display: flex; padding: 28px 0 0 17px; }
.side { width: 323px; margin-right: 28px; font-size: 14.5px; font-weight: 500; letter-spacing: -.2px; display: flex; flex-direction: column; gap: 5.6px; }
.side a { display: flex; align-items: center; height: 39px; padding-left: 11px; border-radius: 10px; }
.side a svg { width: 22px; height: 22px; margin-right: 12px; color: #f0f0f2; }
.side a span { margin-top: -1px; }
.side .wide { letter-spacing: -.15px; }
.side .tight { letter-spacing: -.28px; }
.side .sel { background: #404048; font-weight: 600; }
.main { width: 920px; }
.title { display: flex; align-items: center; height: 48px; }
.title svg { width: 48px; height: 48px; margin-right: 6px; }
.title h1 { margin: -7px 0 0; font-size: 24px; font-weight: 700; letter-spacing: -.34px; }
.actions { display: flex; justify-content: flex-end; margin-top: 28px; height: 36px; }
.disable { width: 206px; height: 36px; padding: 0; border: 0; border-radius: 10px; background: #4cc2ff; color: #1f1f23; font: 700 12.5px "Noto Sans", sans-serif; letter-spacing: 0; }
.pill { width: 129px; height: 43px; border: 5px solid #252529; border-radius: 22px; background: #303034; color: #4bb8f5; font-size: 13px; font-weight: 700; display: flex; align-items: center; justify-content: center; padding-bottom: 2px; }
.table { margin-top: 28px; height: 202px; border-radius: 12px; padding: 0 5px 5px; background: #26262a; display: flex; flex-direction: column; gap: 2px; }
.row { height: 48px; display: grid; grid-template-columns: 64px 64px 168.5px 198px 198px 150px 25px; padding-left: 25.5px; align-items: center; background: #1f1f23; border-radius: 4px; font-size: 14.5px; font-weight: 500; letter-spacing: -.4px; }
.row.head { background: none; height: 47px; font-size: 13px; font-weight: 700; letter-spacing: .05px; }
.row .h-s { padding-left: 5.5px; }
.row .h-w { padding-left: .5px; }
.row > svg { width: 25px; height: 25px; margin: 0 0 0 -6.5px; }
.row > svg.go { color: #30d158; margin-top: -2px; }
.row.first { border-radius: 10px 10px 4px 4px; }
.row.last { border-radius: 4px 4px 10px 10px; }
.row a { color: #4bb8f5; }
.row a.stg { letter-spacing: -.55px; }
.row span { display: flex; align-items: center; }
.row i { font-style: normal; width: 80.5px; letter-spacing: -.65px; word-spacing: 0; }
.row b { width: 41px; height: 24px; border-radius: 12px; background: #20282f; color: #4bb8f5; font-weight: 500; line-height: 25px; text-align: center; letter-spacing: 0; }
.row .dur { letter-spacing: -.4px; }
.h-name svg { width: 8px; height: 11px; margin-left: 7px; }
.sizes { display: flex; align-items: center; margin-top: 28px; height: 36px; font-size: 14px; }
.lbl { width: 38px; letter-spacing: -.45px; margin-top: 1px; }
.sizes b { width: 36px; height: 36px; border-radius: 9px; margin-right: 4px; font-size: 12.5px; font-weight: 600; line-height: 37px; text-align: center; }
.sizes .cur { background: #38383f; }
.dots { width: 22px; height: 8px; margin: 0 12px 0 auto; }
```
